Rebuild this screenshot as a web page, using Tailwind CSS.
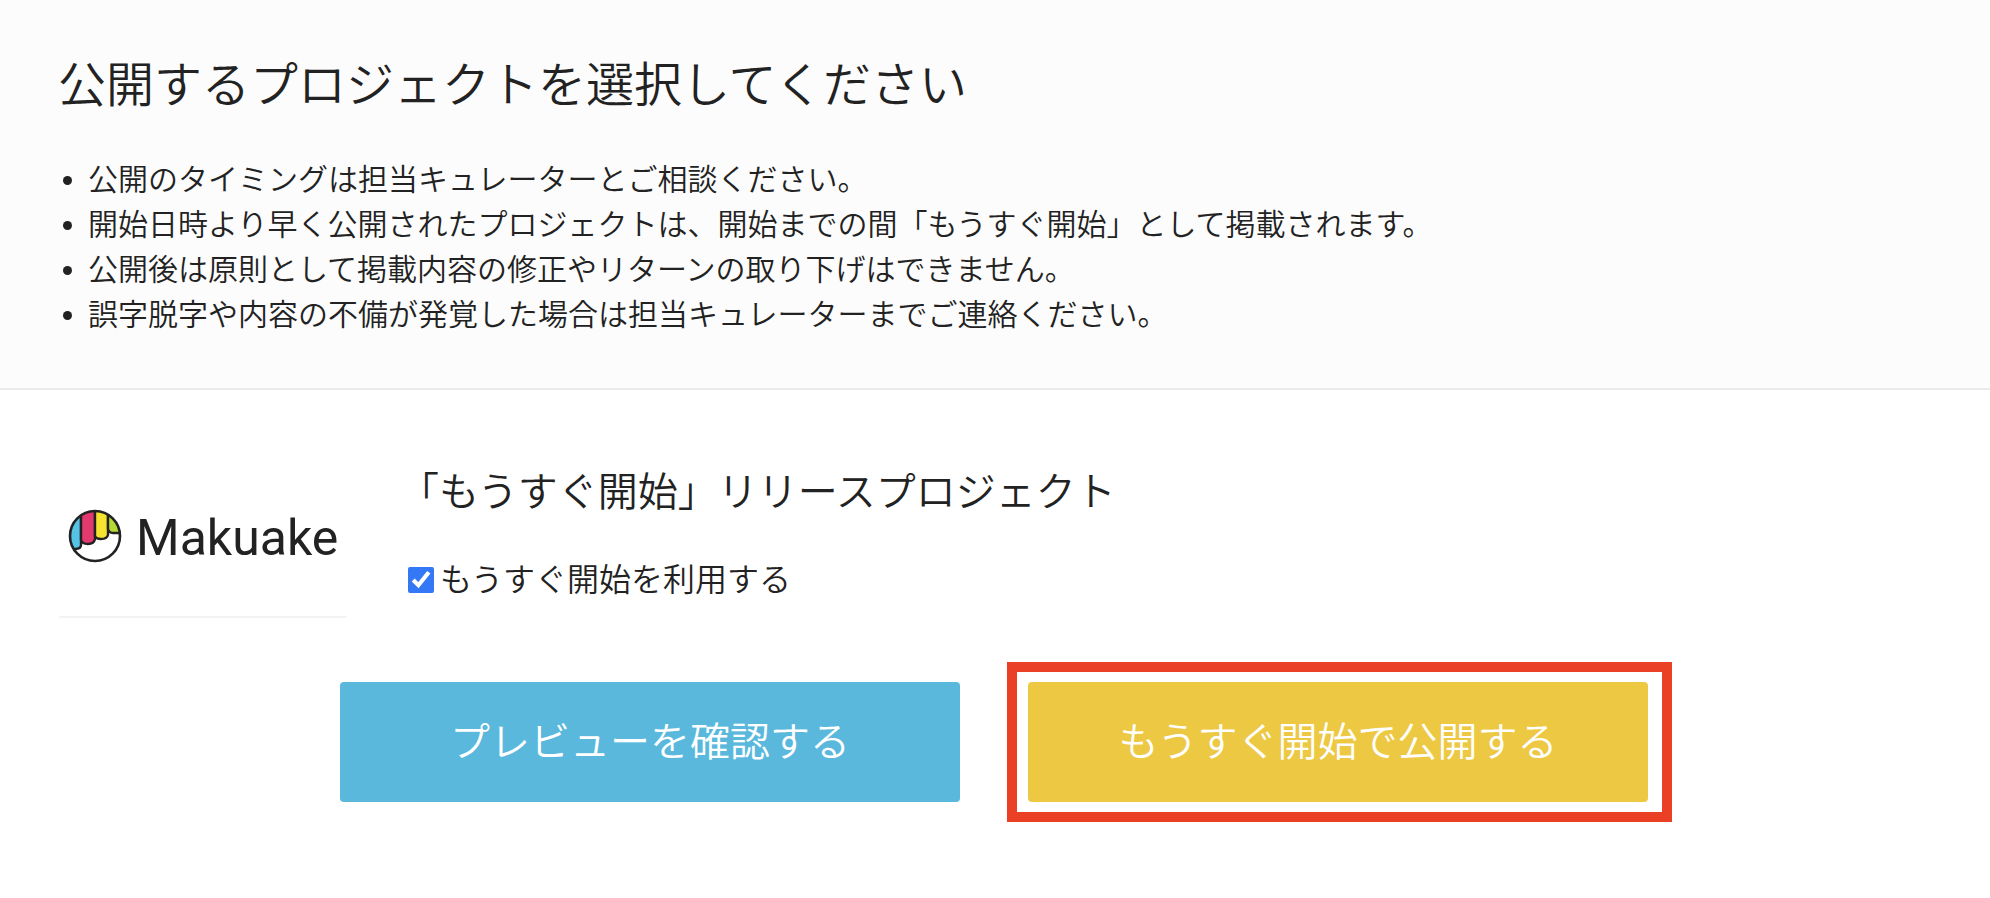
<!DOCTYPE html>
<html lang="ja">
<head>
  <meta charset="UTF-8" />
  <meta name="viewport" content="width=device-width, initial-scale=1.0"/>
  <title>プロジェクトの公開</title>

  <!-- Tailwind CSS CDN -->
  <script src="https://cdn.jsdelivr.net/npm/@tailwindcss/browser@4"></script>
</head>

<body class="min-h-screen bg-white font-['Liberation_Sans','Noto_Sans_CJK_JP',sans-serif] font-[350] text-[#222]">

  <!-- Header -->
  <header class="bg-[#fcfcfc] border-b-2 border-[#ebebeb] px-[59px] pt-[50px] pb-[51px]">
    <h1 class="-ml-px text-[48px] leading-[72px]">公開するプロジェクトを選択してください</h1>
    <ul class="mt-[35px] pl-[29px] list-disc text-[30px] leading-[45px]">
      <li>公開のタイミングは担当キュレーターとご相談ください。</li>
      <li>開始日時より早く公開されたプロジェクトは、開始までの間「もうすぐ開始」として掲載されます。</li>
      <li>公開後は原則として掲載内容の修正やリターンの取り下げはできません。</li>
      <li>誤字脱字や内容の不備が発覚した場合は担当キュレーターまでご連絡ください。</li>
    </ul>
  </header>

  <main class="px-[59px] pt-[66px] pb-[76px]">
    <!-- Project -->
    <section class="flex items-start gap-[52px]">
      <div class="w-[288px] shrink-0 border-b-2 border-[#f3f3f3] rounded-xs">
        <svg class="block w-full" viewBox="0 0 288 160" role="img" aria-label="Makuake">
          <defs>
            <clipPath id="ball"><circle cx="36" cy="80" r="25" /></clipPath>
          </defs>
          <g clip-path="url(#ball)" stroke="#222" stroke-width="2.4">
            <path d="M9 50H22V89Q22 93 16 93L9 96Z" fill="#55c3e6" />
            <path d="M22 50H36V83Q35 88 29 88Q23 88 22 84Z" fill="#e2396f" />
            <path d="M36 50H49V79Q48 83 42 83Q37 83 36 80Z" fill="#f6e32f" />
            <path d="M49 50H64V77H54Q50 77 49 73Z" fill="#b5d935" />
          </g>
          <circle cx="36" cy="80" r="25" fill="none" stroke="#222" stroke-width="2.6" />
          <text x="77" y="99" class="font-['Roboto',sans-serif] text-[50px] font-normal" fill="#222">Makuake</text>
        </svg>
      </div>
      <div class="pt-1.5">
        <h2 class="text-[40px] leading-[60px]">「もうすぐ開始」リリースプロジェクト</h2>
        <label for="soon" class="mt-[34px] ml-[9px] flex items-center gap-1.5 text-[32px] leading-[48px]">
          <input type="checkbox" id="soon" checked class="size-[26px] accent-[#3478f6]" />
          もうすぐ開始を利用する
        </label>
      </div>
    </section>

    <!-- Actions -->
    <div class="mt-11 pl-[22px] flex justify-center gap-[47px] text-[40px] leading-[60px] text-white">
      <button type="button" class="my-5 w-[620px] h-[120px] rounded-sm bg-[#5ab8dd]">プレビューを確認する</button>
      <div class="border-10 border-[#ea4025] py-2.5 pl-[11px] pr-3.5">
        <button type="button" class="w-[620px] h-[120px] rounded-sm bg-[#edc843]">もうすぐ開始で公開する</button>
      </div>
    </div>
  </main>

</body>
</html>
